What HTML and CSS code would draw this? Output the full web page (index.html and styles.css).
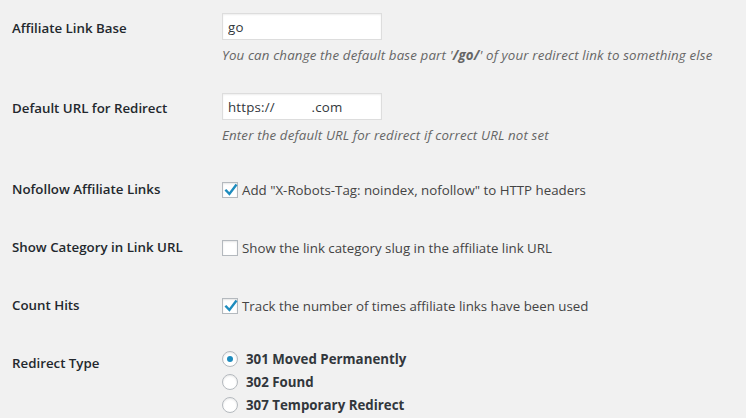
FILE: index.html
```html
<!DOCTYPE html>
<html lang="en">
<head>
    <meta charset="UTF-8">
    <title>Affiliate Links Settings</title>
    <link rel="stylesheet" href="styles.css">
</head>
<body>
<div class="wrap">
    <div class="row">
        <div class="label">Affiliate Link Base</div>
        <div class="field">
            <input type="text" class="text-input" value="go">
            <p class="description">You can change the default base part '<b>/go/</b>' of your redirect link to something else</p>
        </div>
    </div>
    <div class="row">
        <div class="label">Default URL for Redirect</div>
        <div class="field">
            <input type="text" class="text-input" value="https://          .com">
            <p class="description">Enter the default URL for redirect if correct URL not set</p>
        </div>
    </div>
    <div class="row short">
        <div class="label">Nofollow Affiliate Links</div>
        <div class="field">
            <label class="check">
                <span class="box"><svg width="16" height="16" viewBox="0 0 16 16"><path d="M3.2 8.6 L6.4 12 L12.8 3.4" fill="none" stroke="#1e8cbe" stroke-width="2.4" stroke-linecap="square"/></svg></span>
                Add "X-Robots-Tag: noindex, nofollow" to HTTP headers
            </label>
        </div>
    </div>
    <div class="row short">
        <div class="label">Show Category in Link URL</div>
        <div class="field">
            <label class="check">
                <span class="box"></span>
                Show the link category slug in the affiliate link URL
            </label>
        </div>
    </div>
    <div class="row short">
        <div class="label">Count Hits</div>
        <div class="field">
            <label class="check">
                <span class="box"><svg width="16" height="16" viewBox="0 0 16 16"><path d="M3.2 8.6 L6.4 12 L12.8 3.4" fill="none" stroke="#1e8cbe" stroke-width="2.4" stroke-linecap="square"/></svg></span>
                Track the number of times affiliate links have been used
            </label>
        </div>
    </div>
    <div class="row short">
        <div class="label">Redirect Type</div>
        <div class="field radios">
            <label class="radio"><span class="dot on"></span>301 Moved Permanently</label>
            <label class="radio"><span class="dot"></span>302 Found</label>
            <label class="radio"><span class="dot"></span>307 Temporary Redirect</label>
        </div>
    </div>
</div>
</body>
</html>
```

FILE: styles.css
```css
body {
    margin: 0;
    background: #f1f1f1;
    font-family: "Open Sans", "Noto Sans", sans-serif;
    font-size: 13.3px;
    color: #444;
}
.wrap {
    padding: 0 12px;
}
.row {
    display: grid;
    grid-template-columns: 210px 1fr;
}
.label {
    padding: 19px 0 20px;
    font-weight: 600;
    color: #23282d;
    line-height: 18px;
}
.field {
    padding: 13px 0 16px;
}
.short .field {
    padding-top: 21px;
    padding-bottom: 19px;
}
.short .label {
    padding-top: 20px;
}
.text-input {
    display: block;
    box-sizing: border-box;
    width: 160px;
    height: 27px;
    margin: 0;
    padding: 3px 5px;
    border: 1px solid #ddd;
    box-shadow: inset 0 1px 2px rgba(0, 0, 0, .07);
    background: #fff;
    color: #32373c;
    font: 13.3px "Open Sans", "Noto Sans", sans-serif;
    letter-spacing: 0.2px;
    white-space: pre;
}
.description {
    margin: 6px 0 0;
    font-style: italic;
    color: #666;
    line-height: 18px;
    letter-spacing: 0.15px;
}
.description b {
    font-weight: 700;
}
.check {
    display: flex;
    align-items: center;
    gap: 4px;
    line-height: 18px;
}
.box {
    box-sizing: border-box;
    width: 16px;
    height: 16px;
    border: 1px solid #b4b9be;
    background: #fff;
    box-shadow: inset 0 1px 2px rgba(0, 0, 0, .1);
    position: relative;
    flex: none;
}
.box svg {
    position: absolute;
    left: 0;
    top: -1px;
}
.radios {
    display: flex;
    flex-direction: column;
    gap: 5px;
}
.short .radios {
    padding-top: 16px;
}
.radio {
    display: flex;
    align-items: center;
    gap: 8px;
    font-weight: 700;
    color: #32373c;
    line-height: 18px;
}
.dot {
    box-sizing: border-box;
    width: 16px;
    height: 16px;
    border: 1px solid #b4b9be;
    border-radius: 50%;
    background: #fff;
    box-shadow: inset 0 1px 2px rgba(0, 0, 0, .1);
    display: flex;
    align-items: center;
    justify-content: center;
}
.dot.on::before {
    content: "";
    width: 6px;
    height: 6px;
    border-radius: 50%;
    background: #1e8cbe;
}
```
